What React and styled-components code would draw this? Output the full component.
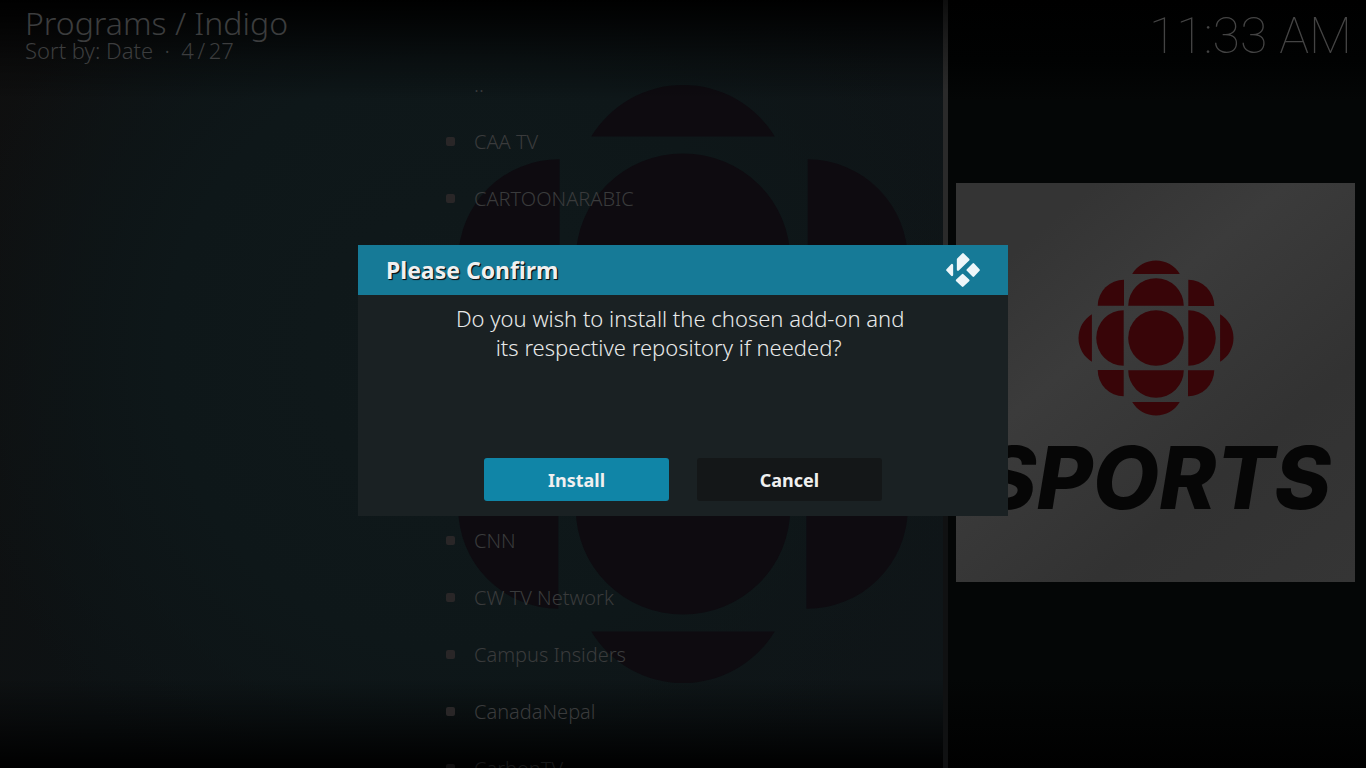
import React from 'react';
import styled, { createGlobalStyle } from 'styled-components';

const GlobalStyle = createGlobalStyle`
  *, *::before, *::after { box-sizing: border-box; }
  html, body { margin: 0; background: #000; }
  body { font-family: "Noto Sans", "Open Sans", sans-serif; color: #3c3d3e; }
  h1, h2, p, ul { margin: 0; padding: 0; font-weight: inherit; }
`;

const Screen = styled.div`
  position: relative;
  height: 100vh;
  overflow: hidden;
  display: grid;
  grid-template-columns: minmax(0, 1fr) 5px 418px;
  background:
    radial-gradient(circle at 34% 46%, #10191b 0, #0e1719 30%, transparent 52%),
    linear-gradient(105deg, #0f0f0f 0, #0d1214 18%, #10171a 100%);
`;

const Fanart = styled.div`
  position: absolute;
  inset: 0;
  display: flex;
  align-items: center;
  justify-content: center;
`;

const Vignette = styled.div`
  position: absolute;
  inset: 0;
  background: linear-gradient(
    #000 0, rgba(0, 0, 0, 0.8) 20px, rgba(0, 0, 0, 0.35) 60px, transparent 100px,
    transparent calc(100% - 90px), rgba(0, 0, 0, 0.4) calc(100% - 50px), rgba(0, 0, 0, 0.9) calc(100% - 8px), #000 100%
  );
`;

const Main = styled.main`
  position: relative;
  min-width: 0;
  min-height: 0;
  overflow: hidden;
`;

const Header = styled.header`
  height: 56px;
  padding: 8px 25px 0;
`;

const Path = styled.h1`
  font-size: 32px;
  font-weight: 300;
  line-height: 30px;
`;

const SortLine = styled.p`
  font-size: 22px;
  font-weight: 300;
  line-height: 24px;
  white-space: pre;
`;

const List = styled.ul`
  list-style: none;
  display: grid;
  grid-auto-rows: 57px;
  margin-left: 446px;
`;

const Item = styled.li`
  display: flex;
  align-items: center;
  gap: 19px;
  font-size: 20px;
  font-weight: 300;
  line-height: 28px;
  color: #3a3b3c;
  opacity: ${(p) => (p.$faded ? 0.4 : 1)};
`;

const Bullet = styled.span`
  width: 9px;
  height: 9px;
  border-radius: 2px;
  background: ${(p) => (p.$shown ? '#292627' : 'transparent')};
`;

const ScrollTrack = styled.div`
  position: relative;
  background: #101112;
`;

const ScrollThumb = styled.div`
  height: 56%;
  background: linear-gradient(#0d0d0d 0, #1c1c1c 40px, #2a2a2a 90px);
`;

const Side = styled.aside`
  position: relative;
  display: flex;
  flex-direction: column;
  padding: 0 11px 75px 8px;
  background: linear-gradient(#000 0, #010202 60px, #040606 100px, #040606 calc(100% - 90px), #000 100%);
`;

const Clock = styled.time`
  height: 72px;
  padding-right: 3px;
  font-family: Roboto, sans-serif;
  font-size: 50px;
  font-weight: 100;
  line-height: 72px;
  text-align: right;
  color: #444;
`;

const Cover = styled.div`
  margin: auto 0;
  aspect-ratio: 1;
  display: flex;
  flex-direction: column;
  align-items: center;
  padding-top: 77px;
  background: linear-gradient(140deg, #343434 0, #343434 16%, #3b3b3b 38%, #363636 56%, #323232 70%, #353535 100%);
`;

const CoverName = styled.span`
  margin-top: 12px;
  font-family: Inter, sans-serif;
  font-size: 86px;
  font-weight: 800;
  font-style: italic;
  line-height: 100px;
  color: #060606;
`;

const Overlay = styled.div`
  position: absolute;
  inset: 0;
  display: grid;
  place-items: center;
  padding-bottom: 7px;
`;

const Dialog = styled.section`
  width: 650px;
  max-width: 100%;
  background: #1a2123;
`;

const DialogHeader = styled.header`
  height: 50px;
  display: flex;
  align-items: center;
  justify-content: space-between;
  padding: 0 28px;
  background: #167a97;
`;

const DialogTitle = styled.h2`
  font-size: 23px;
  font-weight: 700;
  line-height: 32px;
  color: #f0f0f0;
  text-shadow: 1px 1px 1px #0c1214, 1px 1px 0 #0c1214;
`;

const Message = styled.p`
  min-height: 163px;
  padding-top: 9px;
  font-size: 22px;
  font-weight: 300;
  line-height: 29px;
  text-align: center;
  white-space: pre;
  color: #e8e9e9;
`;

const Actions = styled.div`
  display: flex;
  justify-content: center;
  gap: 28px;
  padding-bottom: 15px;
`;

const Action = styled.button`
  width: 185px;
  height: 43px;
  border: 0;
  border-radius: 3px;
  background: ${(p) => (p.$primary ? '#1085a7' : '#141718')};
  color: #f0f0f0;
  font-family: inherit;
  font-size: 18px;
  font-weight: 700;
  line-height: 24px;
`;

function Gem({ size, fill }) {
  const quarter = 'M-174 -96.5A78 78 0 0 1 -95.5 -174V-96.5Z';
  const side = 'M-83 -96.5A83 82 0 0 1 83 -96.5ZM-71 -191.5A83 83 0 0 1 71 -191.5Z';
  return (
    <svg width={size} height={size} viewBox="-233 -233 466 466" fill={fill} aria-hidden="true">
      <circle r="83" />
      {[0, 90, 180, 270].map((angle) => (
        <g key={angle} transform={`rotate(${angle})`}>
          <path d={side} />
          <path d={quarter} />
        </g>
      ))}
    </svg>
  );
}

function KodiMark() {
  return (
    <svg width="34" height="34" viewBox="0 0 102 102" fill="#eef6f9" stroke="#eef6f9" strokeWidth="7" strokeLinejoin="round" aria-hidden="true">
      <path d="M51 4L67 20L36 50V19Z" />
      <path d="M82 34L98 51L82 68L65 51Z" />
      <path d="M50 66L67 82L50 98L33 82Z" />
      <path d="M18 36V66L4 51Z" />
    </svg>
  );
}

const rows = ['..', 'CAA TV', 'CARTOONARABIC', '', '', '', '', '', 'CNN', 'CW TV Network', 'Campus Insiders', 'CanadaNepal', 'CarbonTV'];

export default function App() {
  return (
    <>
      <GlobalStyle />
      <Screen>
        <Fanart><Gem size={602} fill="#0e0b10" /></Fanart>
        <Vignette />
        <Main>
          <Header>
            <Path>Programs / Indigo</Path>
            <SortLine>{'Sort by: Date  ·  4\u2009/\u200927'}</SortLine>
          </Header>
          <List>
            {rows.map((name, i) => (
              <Item key={i} $faded={i === rows.length - 1}>
                <Bullet $shown={i > 0} />
                {name}
              </Item>
            ))}
          </List>
        </Main>
        <ScrollTrack><ScrollThumb /></ScrollTrack>
        <Side>
          <Clock>11:33 AM</Clock>
          <Cover>
            <Gem size={156} fill="#380508" />
            <CoverName>SPORTS</CoverName>
          </Cover>
        </Side>
        <Overlay>
          <Dialog role="dialog" aria-labelledby="confirm-title">
            <DialogHeader>
              <DialogTitle id="confirm-title">Please Confirm</DialogTitle>
              <KodiMark />
            </DialogHeader>
            <Message>{'Do you wish to install the chosen add-on and \nits respective repository if needed?     '}</Message>
            <Actions>
              <Action type="button" $primary>Install</Action>
              <Action type="button">Cancel</Action>
            </Actions>
          </Dialog>
        </Overlay>
      </Screen>
    </>
  );
}
